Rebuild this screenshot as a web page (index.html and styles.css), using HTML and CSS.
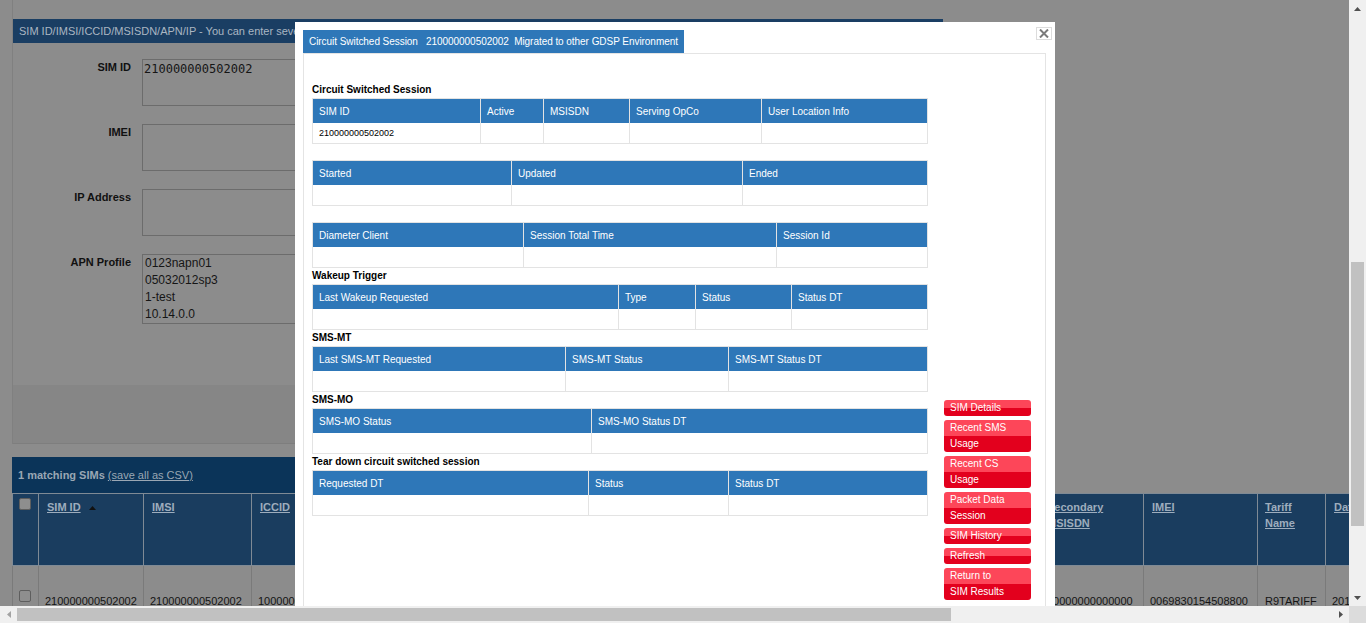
FILE: index.html
```html
<!DOCTYPE html>
<html lang="en">
<head>
<meta charset="utf-8">
<title>SIM Search</title>
<link rel="stylesheet" href="styles.css">
</head>
<body>
<div class="window">
  <div class="viewport">
    <div class="page">
      <section class="search-panel">
        <div class="panel-head">SIM ID/IMSI/ICCID/MSISDN/APN/IP - You can enter several numbers, one per line, to search for multiple SIMs</div>
        <div class="form">
          <div class="row"><label class="lbl">SIM ID</label><textarea class="field">210000000502002</textarea></div>
          <div class="row"><label class="lbl">IMEI</label><textarea class="field"></textarea></div>
          <div class="row"><label class="lbl">IP Address</label><textarea class="field"></textarea></div>
          <div class="row"><label class="lbl">APN Profile</label>
            <div class="listbox">
              <div>0123napn01</div>
              <div>05032012sp3</div>
              <div>1-test</div>
              <div>10.14.0.0</div>
            </div>
          </div>
        </div>
        <div class="actions"></div>
      </section>

      <section class="results">
        <div class="results-head"><b>1 matching SIMs</b> <a class="csv">(save all as CSV)</a></div>
        <table class="sims">
          <colgroup>
            <col class="c-cb"><col class="c-sim"><col class="c-imsi"><col class="c-iccid"><col class="c-msisdn"><col class="c-status"><col class="c-cust"><col class="c-rate"><col class="c-act"><col class="c-sec"><col class="c-imei"><col class="c-tariff"><col class="c-date">
          </colgroup>
          <thead>
            <tr>
              <th class="cbcell"><input type="checkbox" class="cb"></th>
              <th><a>SIM ID</a><svg class="sort" width="7" height="4" viewBox="0 0 7 4"><polygon points="0,4 3.5,0 7,4" fill="#111"/></svg></th>
              <th><a>IMSI</a></th>
              <th><a>ICCID</a></th>
              <th><a>MSISDN</a></th>
              <th><a>Status</a></th>
              <th><a>Customer</a></th>
              <th><a>Rate Plan</a></th>
              <th><a>Activation Date</a></th>
              <th><a>Secondary MSISDN</a></th>
              <th><a>IMEI</a></th>
              <th class="tariff"><a>Tariff Name</a></th>
              <th><a>Date Activated</a></th>
            </tr>
          </thead>
          <tbody>
            <tr>
              <td class="cbcell"><input type="checkbox" class="cb"></td>
              <td>210000000502002</td>
              <td>210000000502002</td>
              <td>1000000000000000000</td>
              <td>4470000000000</td>
              <td>Active</td>
              <td>Test Customer</td>
              <td>RP01</td>
              <td>2012-03-05</td>
              <td class="sec">00000000000000</td>
              <td>0069830154508800</td>
              <td class="tariffv">R9TARIFF</td>
              <td>2012-03-05</td>
            </tr>
          </tbody>
        </table>
      </section>
    </div>

    <div class="dialog">
      <button class="close" aria-label="Close">
        <svg width="10" height="9" viewBox="0 0 10 9"><path d="M1 0.5 L9 8.5 M9 0.5 L1 8.5" stroke="#7a7a7a" stroke-width="2"/></svg>
      </button>
      <div class="tab">Circuit Switched Session&nbsp;&nbsp;&nbsp;210000000502002&nbsp;&nbsp;Migrated to other GDSP Environment</div>
      <div class="tab-panel">
        <div class="cs-layout">
          <div class="sections">
            <div class="sec-title">Circuit Switched Session</div>
            <table class="cs">
              <colgroup><col style="width:168px"><col style="width:63px"><col style="width:86px"><col style="width:132px"><col style="width:166px"></colgroup>
              <tr><th>SIM ID</th><th>Active</th><th>MSISDN</th><th>Serving OpCo</th><th>User Location Info</th></tr>
              <tr><td>210000000502002</td><td></td><td></td><td></td><td></td></tr>
            </table>

            <div class="sec-title"></div>
            <table class="cs">
              <colgroup><col style="width:199px"><col style="width:231px"><col style="width:185px"></colgroup>
              <tr><th>Started</th><th>Updated</th><th>Ended</th></tr>
              <tr><td></td><td></td><td></td></tr>
            </table>

            <div class="sec-title"></div>
            <table class="cs">
              <colgroup><col style="width:211px"><col style="width:253px"><col style="width:151px"></colgroup>
              <tr><th>Diameter Client</th><th>Session Total Time</th><th>Session Id</th></tr>
              <tr><td></td><td></td><td></td></tr>
            </table>

            <div class="sec-title">Wakeup Trigger</div>
            <table class="cs">
              <colgroup><col style="width:306px"><col style="width:77px"><col style="width:96px"><col style="width:136px"></colgroup>
              <tr><th>Last Wakeup Requested</th><th>Type</th><th>Status</th><th>Status DT</th></tr>
              <tr><td></td><td></td><td></td><td></td></tr>
            </table>

            <div class="sec-title">SMS-MT</div>
            <table class="cs">
              <colgroup><col style="width:253px"><col style="width:163px"><col style="width:199px"></colgroup>
              <tr><th>Last SMS-MT Requested</th><th>SMS-MT Status</th><th>SMS-MT Status DT</th></tr>
              <tr><td></td><td></td><td></td></tr>
            </table>

            <div class="sec-title">SMS-MO</div>
            <table class="cs">
              <colgroup><col style="width:279px"><col style="width:336px"></colgroup>
              <tr><th>SMS-MO Status</th><th>SMS-MO Status DT</th></tr>
              <tr><td></td><td></td></tr>
            </table>

            <div class="sec-title">Tear down circuit switched session</div>
            <table class="cs">
              <colgroup><col style="width:276px"><col style="width:140px"><col style="width:199px"></colgroup>
              <tr><th>Requested DT</th><th>Status</th><th>Status DT</th></tr>
              <tr><td></td><td></td><td></td></tr>
            </table>
          </div>

          <div class="side">
            <a class="rbtn">SIM Details</a>
            <a class="rbtn">Recent SMS Usage</a>
            <a class="rbtn">Recent CS Usage</a>
            <a class="rbtn">Packet Data Session</a>
            <a class="rbtn">SIM History</a>
            <a class="rbtn">Refresh</a>
            <a class="rbtn">Return to SIM Results</a>
          </div>
        </div>
      </div>
    </div>
  </div>

  <div class="vscroll">
    <div class="sbtn"><svg width="7" height="4" viewBox="0 0 7 4"><polygon points="0,4 3.5,0 7,4" fill="#505050"/></svg></div>
    <div class="vtrack"><div class="vthumb"></div></div>
    <div class="sbtn"><svg width="7" height="4" viewBox="0 0 7 4"><polygon points="0,0 7,0 3.5,4" fill="#505050"/></svg></div>
  </div>
  <div class="hscroll">
    <div class="sbtn"><svg width="4" height="7" viewBox="0 0 4 7"><polygon points="4,0 4,7 0,3.5" fill="#a3a3a3"/></svg></div>
    <div class="htrack"><div class="hthumb"></div></div>
    <div class="sbtn"><svg width="4" height="7" viewBox="0 0 4 7"><polygon points="0,0 4,3.5 0,7" fill="#505050"/></svg></div>
  </div>
  <div class="corner"></div>
</div>
</body>
</html>
```

FILE: styles.css
```css
html, body {
  margin: 0;
  padding: 0;
}

body {
  font-family: "Liberation Sans", Arial, sans-serif;
  overflow: hidden;
  background: #8c8c8c;
}

.window {
  display: grid;
  grid-template-columns: 1349px 17px;
  grid-template-rows: 606px 17px;
  width: 1366px;
  height: 623px;
}

.viewport {
  position: relative;
  overflow: hidden;
  background: #8c8c8c;
}

/* ---------- underlying (dimmed) page ---------- */
.search-panel {
  margin-left: 12px;
  width: 930px;
  border-left: 1px solid #808080;
  padding-top: 19px;
}

.panel-head {
  height: 24px;
  line-height: 24px;
  background: #1a3e63;
  color: #aab6c2;
  font-size: 11px;
  padding-left: 6px;
  white-space: nowrap;
  overflow: hidden;
}

.form {
  padding: 16px 0 61px;
}

.row {
  display: flex;
  gap: 11px;
  margin-bottom: 18px;
}

.row:last-child {
  margin-bottom: 0;
}

.lbl {
  width: 118px;
  text-align: right;
  font-size: 11px;
  font-weight: bold;
  line-height: 13px;
  padding-top: 2px;
  color: #111;
}

.field {
  width: 360px;
  height: 47px;
  box-sizing: border-box;
  margin: 0;
  border: 1px solid #6c6c6c;
  background: #8c8c8c;
  padding: 2px 1px;
  resize: none;
  font-family: "DejaVu Sans Mono", "Liberation Mono", monospace;
  font-size: 12px;
  line-height: 14px;
  color: #151515;
  overflow: hidden;
}

.listbox {
  width: 360px;
  height: 70px;
  box-sizing: border-box;
  border: 1px solid #6c6c6c;
  padding: 0 2px;
  font-size: 12px;
  line-height: 17px;
  color: #151515;
}

.actions {
  height: 58px;
  background: #868686;
  border-bottom: 1px solid #7e7e7e;
}

.results {
  margin: 13px 0 0 12px;
}

.results-head {
  width: 931px;
  height: 36px;
  line-height: 36px;
  box-sizing: border-box;
  padding-left: 6px;
  background: #0b3459;
  color: #9aa7b4;
  font-size: 11px;
  white-space: nowrap;
}

.csv {
  text-decoration: underline;
}

.sims {
  border-collapse: collapse;
  table-layout: fixed;
  width: 1433px;
  font-size: 11px;
}

.c-cb { width: 26px; }
.c-sim { width: 105px; }
.c-imsi { width: 108px; }
.c-iccid { width: 130px; }
.c-msisdn { width: 110px; }
.c-status { width: 100px; }
.c-cust { width: 150px; }
.c-rate { width: 150px; }
.c-act { width: 147px; }
.c-sec { width: 105px; }
.c-imei { width: 114px; }
.c-tariff { width: 68px; }
.c-date { width: 120px; }

.sims th {
  height: 72px;
  box-sizing: border-box;
  background: #1a3d5f;
  border: 1px solid #7f8a95;
  vertical-align: top;
  text-align: left;
  padding: 5px 6px 0 8px;
  font-weight: bold;
  line-height: 16px;
  color: #9eadbd;
}

.sims th a {
  text-decoration: underline;
}

.sims th.cbcell {
  padding: 4px 0 0 6px;
}

.sims th.tariff {
  padding-left: 7px;
}

.sort {
  margin-left: 8px;
  vertical-align: 1px;
}

.sims td {
  height: 68px;
  box-sizing: border-box;
  border: 1px solid #7a7a7a;
  border-bottom: 0;
  vertical-align: top;
  padding: 28px 6px 0 6px;
  line-height: 14px;
  color: #141414;
  white-space: nowrap;
  overflow: hidden;
}

.sims td.cbcell {
  padding: 24px 0 0 6px;
}

.sims td.sec {
  padding-left: 8px;
}

.sims td.tariffv {
  padding-left: 7px;
}

.cb {
  appearance: none;
  -webkit-appearance: none;
  display: block;
  margin: 0;
  width: 12px;
  height: 12px;
  box-sizing: border-box;
  border: 1px solid #5e5e5e;
  border-radius: 2px;
  background: #8e8e8e;
}

/* ---------- dialog ---------- */
.dialog {
  position: absolute;
  left: 295px;
  top: 22px;
  width: 760px;
  height: 600px;
  box-sizing: border-box;
  padding: 8px;
  background: #fff;
}

.close {
  position: absolute;
  top: 5px;
  right: 3px;
  width: 16px;
  height: 13px;
  box-sizing: border-box;
  margin: 0;
  padding: 0;
  border: 1px solid #dcdcdc;
  background: #fff;
  display: flex;
  align-items: center;
  justify-content: center;
}

.tab {
  display: inline-block;
  vertical-align: top;
  background: #2e77b8;
  color: #fff;
  font-size: 10px;
  line-height: 23px;
  padding: 0 6px;
  letter-spacing: -0.05px;
  white-space: nowrap;
}

.tab-panel {
  width: 743px;
  height: 560px;
  box-sizing: border-box;
  border: 1px solid #e4e4e4;
  padding: 28px 8px 0;
}

.cs-layout {
  display: flex;
  align-items: flex-start;
}

.sections {
  width: 616px;
}

.sec-title {
  height: 16px;
  line-height: 16px;
  font-size: 10px;
  font-weight: bold;
  color: #000;
}

.cs {
  width: 616px;
  border-collapse: collapse;
  table-layout: fixed;
}

.cs th {
  height: 24px;
  padding: 0 6px;
  background: #2e77b8;
  color: #fff;
  font-size: 10px;
  font-weight: normal;
  text-align: left;
  border: 1px solid #e3e3e3;
  border-bottom: 0 none;
  white-space: nowrap;
}

.cs td {
  height: 20px;
  padding: 0 6px;
  font-size: 9px;
  color: #000;
  border: 1px solid #e3e3e3;
  border-top: 0 none;
}

.side {
  margin-left: 16px;
  margin-top: 318px;
  display: flex;
  flex-direction: column;
  gap: 4px;
}

.rbtn {
  display: block;
  width: 87px;
  box-sizing: border-box;
  padding: 0 20px 0 6px;
  border-radius: 3px;
  background: linear-gradient(#fd4659 50%, #e3001d 50%);
  color: #fff;
  font-size: 10px;
  line-height: 16px;
}

/* ---------- scrollbars ---------- */
.vscroll {
  display: flex;
  flex-direction: column;
  background: #f0f0f0;
}

.sbtn {
  width: 17px;
  height: 17px;
  flex: none;
  display: flex;
  align-items: center;
  justify-content: center;
}

.vtrack {
  flex: 1;
}

.vthumb {
  margin: 245px 2px 0;
  height: 264px;
  background: #c1c1c1;
}

.hscroll {
  display: flex;
  background: #f0f0f0;
}

.htrack {
  flex: 1;
}

.hthumb {
  margin-top: 2px;
  width: 934px;
  height: 13px;
  background: #c1c1c1;
}

.corner {
  background: #dcdcdc;
}
```
